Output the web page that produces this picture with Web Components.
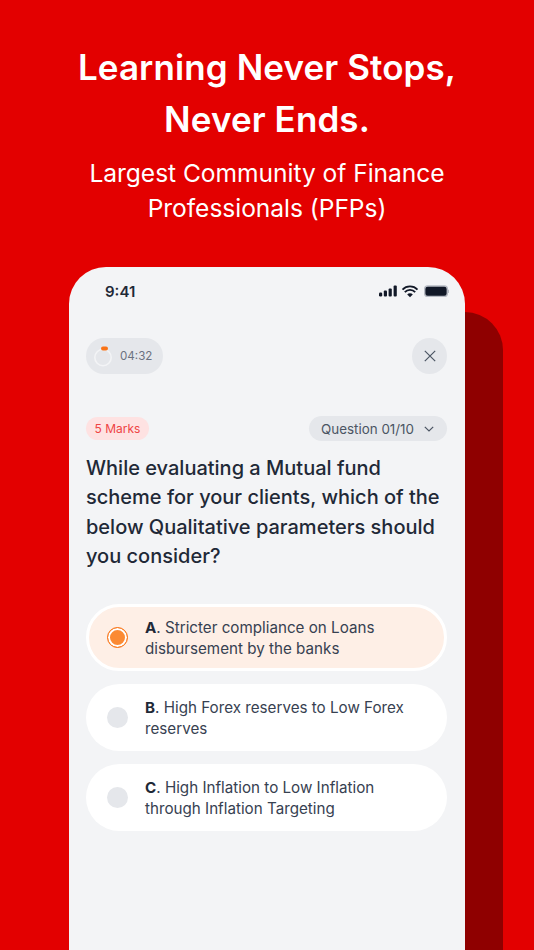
<!DOCTYPE html>
<html lang="en">
<head>
<meta charset="utf-8">
<title>Learning Never Stops</title>
<style>
    html, body { margin: 0; height: 950px; overflow: hidden; background: #e30000; }
    body { font-family: "Inter", "Liberation Sans", sans-serif; }
</style>
</head>
<body>
<promo-screen>
    <span slot="title">Learning Never Stops,<br>Never Ends.</span>
    <span slot="subtitle">Largest Community of Finance<br>Professionals (PFPs)</span>
    <phone-frame>
        <status-bar time="9:41"></status-bar>
        <quiz-toolbar time="04:32"></quiz-toolbar>
        <question-meta marks="5 Marks" progress="Question 01/10"></question-meta>
        <question-text>While evaluating a Mutual fund<br>scheme for your clients, which of the<br>below Qualitative parameters should<br>you consider?</question-text>
        <answer-option letter="A" selected>. Stricter compliance on Loans<br>disbursement by the banks</answer-option>
        <answer-option letter="B">. High Forex reserves to Low Forex<br>reserves</answer-option>
        <answer-option letter="C">. High Inflation to Low Inflation<br>through Inflation Targeting</answer-option>
    </phone-frame>
</promo-screen>

<script>
class PromoScreen extends HTMLElement {
    constructor() {
        super();
        this.attachShadow({ mode: "open" });
        this.shadowRoot.innerHTML = `
            <style>
                :host { display: block; width: 534px; height: 950px; overflow: hidden; color: #fff; }
                .head { padding-top: 41px; text-align: center; height: 225px; box-sizing: border-box; }
                h1 { margin: 0; font: 600 35px/52px "Inter", sans-serif; letter-spacing: 0.1px; }
                p { margin: 11px 0 0; font: 400 24.6px/35px "Inter", sans-serif; letter-spacing: -0.05px; }
            </style>
            <div class="head">
                <h1><slot name="title"></slot></h1>
                <p><slot name="subtitle"></slot></p>
            </div>
            <slot></slot>
        `;
    }
}

class PhoneFrame extends HTMLElement {
    constructor() {
        super();
        this.attachShadow({ mode: "open" });
        this.shadowRoot.innerHTML = `
            <style>
                :host { display: block; position: relative; margin: 42px 0 0 69px; width: 396px; height: 683px; }
                .back { position: absolute; left: 38px; top: 45px; width: 396px; height: 700px; background: #8f0000; border-radius: 38px; }
                .screen { position: relative; box-sizing: border-box; height: 100%; padding: 0 18px 0 17px; background: #f3f4f6; border-radius: 37px 37px 0 0; }
            </style>
            <div class="back"></div>
            <div class="screen"><slot></slot></div>
        `;
    }
}

class StatusBar extends HTMLElement {
    constructor() {
        super();
        this.attachShadow({ mode: "open" });
        this.shadowRoot.innerHTML = `
            <style>
                :host { display: flex; justify-content: space-between; align-items: center; height: 50px; padding: 0 0 0 19px; margin-right: -2px; color: #1f2937; }
                .time { font: 600 15px/18px "Inter", sans-serif; }
                svg { display: block; }
            </style>
            <span class="time">${this.getAttribute("time")}</span>
            <svg width="70" height="14" viewBox="0 0 70 14">
                <rect x="0" y="7.5" width="3.2" height="4" rx="1.2" fill="#111827"/>
                <rect x="4.8" y="5.5" width="3.2" height="6" rx="1" fill="#111827"/>
                <rect x="9.6" y="3.5" width="3.2" height="8" rx="1" fill="#111827"/>
                <rect x="14.6" y="0.5" width="3.2" height="11" rx="1" fill="#111827"/>
                <path d="M23.5 4.6a10.4 10.4 0 0 1 15 0M25.8 7.2a7 7 0 0 1 10.4 0" fill="none" stroke="#111827" stroke-width="1.8"/>
                <path d="M28.2 9.6a3.8 3.8 0 0 1 5.6 0L31 12.3z" fill="#111827"/>
                <rect x="45.7" y="1" width="22.6" height="10.4" rx="3" fill="#111827" stroke="#b6bac3" stroke-width="1.4"/>
                <rect x="69" y="4.6" width="1" height="3.4" rx=".5" fill="#b6bac3"/>
            </svg>
        `;
    }
}

class QuizToolbar extends HTMLElement {
    constructor() {
        super();
        this.attachShadow({ mode: "open" });
        this.shadowRoot.innerHTML = `
            <style>
                :host { display: flex; justify-content: space-between; align-items: center; margin-top: 21px; height: 36px; }
                .timer { display: flex; align-items: center; gap: 7px; box-sizing: border-box; width: 77px; height: 36px; padding-left: 7px; background: #e5e7eb; border-radius: 18px; color: #6b7280; font: 400 11.6px "Inter", sans-serif; }
                .close { display: flex; align-items: center; justify-content: center; width: 35px; height: 36px; background: #e5e7eb; border-radius: 50%; }
                svg { display: block; }
            </style>
            <div class="timer">
                <svg width="20" height="24" viewBox="0 0 20 24">
                    <circle cx="10" cy="13.5" r="8.2" fill="none" stroke="#f3f4f6" stroke-width="1.6"/>
                    <rect x="8" y="2.5" width="7" height="4" rx="2" fill="#f97316"/>
                </svg>
                <span>${this.getAttribute("time")}</span>
            </div>
            <div class="close">
                <svg width="12" height="12" viewBox="0 0 12 12"><path d="M.8.8l10.4 10.4M11.2.8L.8 11.2" stroke="#4b5563" stroke-width="1.2" fill="none"/></svg>
            </div>
        `;
    }
}

class QuestionMeta extends HTMLElement {
    constructor() {
        super();
        this.attachShadow({ mode: "open" });
        this.shadowRoot.innerHTML = `
            <style>
                :host { display: flex; justify-content: space-between; align-items: center; margin-top: 42px; height: 25px; font: 400 12px "Inter", sans-serif; }
                .marks { padding: 0 8.5px; line-height: 23px; background: #fee2e2; color: #ef4444; border-radius: 12px; }
                .progress { display: flex; align-items: center; gap: 10px; height: 25px; padding: 0 13px 0 12px; background: #e5e7eb; color: #4b5563; border-radius: 13px; font-size: 13.4px; }
                svg { display: block; }
            </style>
            <span class="marks">${this.getAttribute("marks")}</span>
            <span class="progress">
                <span>${this.getAttribute("progress")}</span>
                <svg width="10" height="6" viewBox="0 0 10 6"><path d="M.8.8L5 5l4.2-4.2" stroke="#4b5563" stroke-width="1.2" fill="none"/></svg>
            </span>
        `;
    }
}

class QuestionText extends HTMLElement {
    constructor() {
        super();
        this.attachShadow({ mode: "open" });
        this.shadowRoot.innerHTML = `
            <style>
                :host { display: block; margin: 13px 0 33px; color: #1f2937; font: 500 20px/29.3px "Inter", sans-serif; white-space: nowrap; }
            </style>
            <slot></slot>
        `;
    }
}

class AnswerOption extends HTMLElement {
    constructor() {
        super();
        this.attachShadow({ mode: "open" });
        this.shadowRoot.innerHTML = `
            <style>
                :host { display: flex; align-items: center; box-sizing: border-box; height: 67px; margin-top: 13px; padding: 0 20px 0 21px; gap: 17px; background: #fff; border-radius: 34px; color: #374151; font: 400 15.2px/21px "Inter", sans-serif; white-space: nowrap; }
                :host([selected]) { background: #feefe6; border: 3px solid #fff; padding: 0 17px 0 18px; margin-top: 20px; }
                .radio { flex: none; box-sizing: border-box; width: 21px; height: 21px; border-radius: 50%; background: #e5e7eb; }
                :host([selected]) .radio { background: #fb8a33; border: 1.5px solid #f97316; box-shadow: inset 0 0 0 2px #fff; }
                b { font-weight: 700; color: #1f2937; }
            </style>
            <span class="radio"></span>
            <span><b>${this.getAttribute("letter")}</b><slot></slot></span>
        `;
    }
}

customElements.define("promo-screen", PromoScreen);
customElements.define("phone-frame", PhoneFrame);
customElements.define("status-bar", StatusBar);
customElements.define("quiz-toolbar", QuizToolbar);
customElements.define("question-meta", QuestionMeta);
customElements.define("question-text", QuestionText);
customElements.define("answer-option", AnswerOption);
</script>
</body>
</html>
